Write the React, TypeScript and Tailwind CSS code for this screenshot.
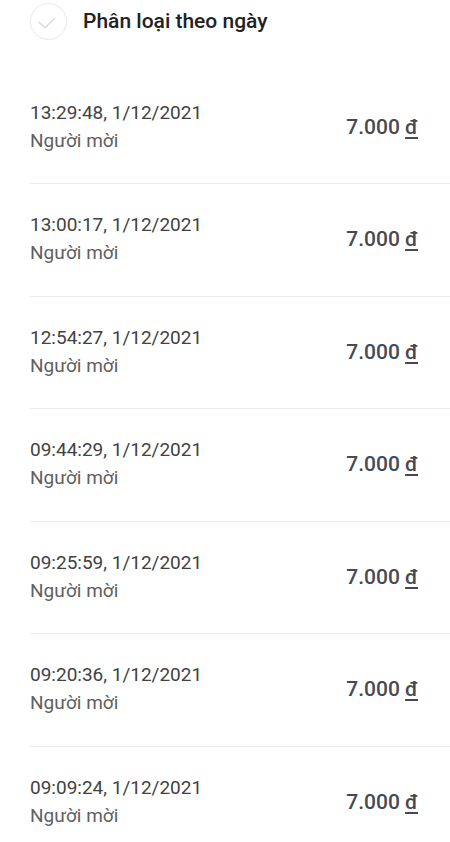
import React from "react";

const rows = [
  "13:29:48, 1/12/2021",
  "13:00:17, 1/12/2021",
  "12:54:27, 1/12/2021",
  "09:44:29, 1/12/2021",
  "09:25:59, 1/12/2021",
  "09:20:36, 1/12/2021",
  "09:09:24, 1/12/2021",
];

export default function App() {
  return (
    <div
      className="w-[450px] h-[842px] overflow-hidden bg-white"
      style={{ fontFamily: "Roboto, 'Noto Sans', sans-serif" }}
    >
      <div className="flex items-center h-[43px] pl-[30px]">
        <div className="w-[37px] h-[37px] rounded-full border-[1.5px] border-[#e8e8e8] flex items-center justify-center">
          <svg width="37" height="37" viewBox="0 0 37 37" fill="none">
            <path
              d="M8.5 19.5 L15 25 L24.5 15.5"
              stroke="#dcdcdc"
              strokeWidth="1.6"
              strokeLinecap="round"
              strokeLinejoin="round"
            />
          </svg>
        </div>
        <div className="ml-[16px] text-[21px] font-medium text-[#222222] leading-none">
          Phân loại theo ngày
        </div>
      </div>
      <div className="h-[28.5px]" />
      <div className="ml-[30px]">
        {rows.map((t) => (
          <div
            key={t}
            className="h-[112.5px] border-b border-[#ececec] flex items-start"
          >
            <div className="flex-1 pt-[27px]">
              <div className="text-[19px] leading-[28px] text-[#424242]">{t}</div>
              <div className="text-[19px] leading-[28px] text-[#606060]">Người mời</div>
            </div>
            <div className="pt-[41px] pr-[32px] text-[21px] leading-[28px] font-medium text-[#464a50]">
              7.000 <span className="underline underline-offset-[3px] decoration-[1.5px]">đ</span>
            </div>
          </div>
        ))}
      </div>
    </div>
  );
}
